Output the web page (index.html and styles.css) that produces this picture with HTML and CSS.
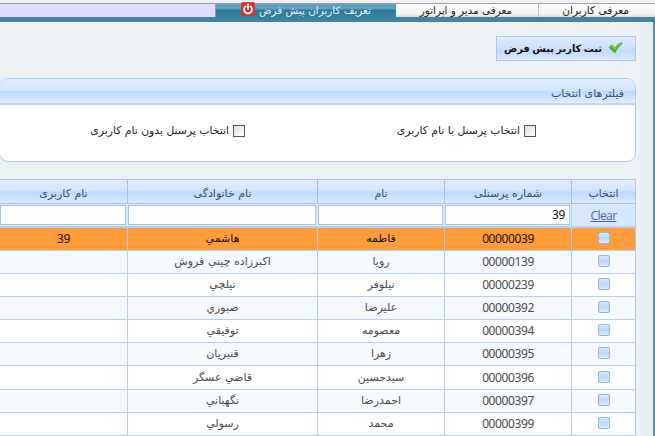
FILE: index.html
```
<!DOCTYPE html>
<html lang="fa" dir="rtl">
<head>
<meta charset="utf-8">
<title>تعریف کاربران پیش فرض</title>
<link rel="stylesheet" href="styles.css">
</head>
<body>
<nav class="tabs">
  <div class="tab tab-users"><span>معرفی کاربران</span></div>
  <div class="tab tab-admin"><span>معرفی مدیر و اپراتور</span></div>
  <div class="tab tab-active"><span>تعریف کاربران پیش فرض</span>
    <svg class="power" viewBox="0 0 14 14"><rect width="14" height="14" rx="2" fill="#d7342f"/><path d="M4.6 4.2a4 4 0 1 0 4.8 0" fill="none" stroke="#fff" stroke-width="1.7" stroke-linecap="round"/><path d="M7 2v5" stroke="#fff" stroke-width="1.7" stroke-linecap="round"/></svg>
  </div>
  <div class="tab-rest"></div>
</nav>
<main class="content">
  <button class="submit"><svg class="check" viewBox="0 0 15 12"><path d="M.8 5.2 4 2.8l2.7 3.1C8.4 3.500 10.700 1.500 13.600.700l.7.8C11.300 4 8.800 7.200 7 11.200Z" fill="#43b51d" stroke="#66ad50" stroke-width=".7"/><path d="m2.200 5.200 1.700-1.200 2.900 3.200c1.500-2.200 3.500-4.300 5.700-5.500" fill="none" stroke="#8ee05a" stroke-width="1"/></svg><span>ثبت کاربر پیش فرض</span></button>
  <section class="panel">
    <h2><span>فیلترهای انتخاب</span></h2>
    <div class="options">
      <label class="opt-with"><i class="box"></i><span>انتخاب پرسنل با نام کاربری</span></label>
      <label class="opt-without"><i class="box"></i><span>انتخاب پرسنل بدون نام کاربری</span></label>
    </div>
  </section>
  <div class="grid">
    <div class="row head"><div><span>انتخاب</span></div><div><span>شماره پرسنلی</span></div><div><span>نام</span></div><div><span>نام خانوادگی</span></div><div><span>نام کاربری</span></div></div>
    <div class="row filter"><div><a>Clear</a></div><div class="field">39</div><div class="field"></div><div class="field"></div><div class="field"></div></div>
    <div class="row selected"><div><i class="tick"></i></div><div class="num">00000039</div><div><span>فاطمه</span></div><div><span>هاشمي</span></div><div class="num">39</div></div>
    <div class="row alt"><div><i class="tick"></i></div><div class="num">00000139</div><div><span>رويا</span></div><div><span>اکبرزاده چيني فروش</span></div><div></div></div>
    <div class="row"><div><i class="tick"></i></div><div class="num">00000239</div><div><span>نيلوفر</span></div><div><span>نيلچي</span></div><div></div></div>
    <div class="row alt"><div><i class="tick"></i></div><div class="num">00000392</div><div><span>عليرضا</span></div><div><span>صبوري</span></div><div></div></div>
    <div class="row"><div><i class="tick"></i></div><div class="num">00000394</div><div><span>معصومه</span></div><div><span>توفيقي</span></div><div></div></div>
    <div class="row alt"><div><i class="tick"></i></div><div class="num">00000395</div><div><span>زهرا</span></div><div><span>قنبريان</span></div><div></div></div>
    <div class="row"><div><i class="tick"></i></div><div class="num">00000396</div><div><span>سيدحسين</span></div><div><span>قاضي عسگر</span></div><div></div></div>
    <div class="row alt"><div><i class="tick"></i></div><div class="num">00000397</div><div><span>احمدرضا</span></div><div><span>نگهباني</span></div><div></div></div>
    <div class="row"><div><i class="tick"></i></div><div class="num">00000399</div><div><span>محمد</span></div><div><span>رسولي</span></div><div></div></div>
  </div>
</main>
</body>
</html>
```
FILE: styles.css
```
* { box-sizing: border-box; }
body {
  margin: 0;
  width: 655px;
  height: 436px;
  overflow: hidden;
  background: #ecf1f3;
  font: 11px/14px "DejaVu Sans", sans-serif;
  color: #222;
}
.tabs {
  display: flex;
  height: 22px;
  padding-top: 3px;
  border-bottom: 5px solid #4384a3;
  background: linear-gradient(#eef1f3 3px, #999ba6 3px, #999ba6 4px, #fff 4px);
}
.tab { display: flex; align-items: flex-start; height: 14px; border-top: 1px solid #999ba6; white-space: nowrap; font-size: 10.4px; }
.tab span { line-height: 12px; }
.tab-users, .tab-admin { background: linear-gradient(#fff, #f1f1f1 80%, #ddd); }
.tab-users { width: 117px; padding-right: 26px; border-left: 1px solid #bbb; font-size: 10.6px; }
.tab-admin { width: 142px; padding-right: 26px; }
.tab-active { width: 180px; height: 19px; padding-right: 25px; color: #e6f3f8; background: linear-gradient(#61a0bd 5px, #2c7898 6px, #4384a3); }
.tab-rest { width: 216px; height: 14px; border: 1px solid #999ba6; border-width: 1px 1px 0 0; background: #deddfc; }
.power { flex: none; width: 14px; height: 14px; margin: -2px 4px 0 0; }
.content {
  height: 414px;
  padding: 14px 17px 0 0;
  border-right: 2px solid #5591a9;
  background: linear-gradient(to left, #e5edf1, #ecf1f3 16px);
}
.submit {
  display: flex;
  align-items: center;
  width: 140px;
  height: 25px;
  margin: 0;
  padding: 0 12px 0 0;
  border: 1px solid #a9c9f2;
  background: linear-gradient(#deebfe, #cee1fc 50%, #bdd9fb 51%, #d9e9ff);
  color: #111;
  font: bold 9.9px/14px "DejaVu Sans", sans-serif;
  word-spacing: -1px;
  white-space: nowrap;
}
.check { flex: none; width: 15px; height: 12px; margin: 0 0 2px 6px; }
.panel { width: 637px; height: 84px; margin-top: 17px; border: 1px solid #abcaf3; border-radius: 9px; background: #fff; overflow: hidden; }
.panel h2 {
  height: 26px;
  margin: 0;
  padding: 8px 11px 0 0;
  border-bottom: 2px solid #bfd8f8;
  background: linear-gradient(#dfecff, #d1e3fd 50%, #bed9fa 52%, #def0ff);
  color: #3f506b;
  font: 11px/14px "DejaVu Sans", sans-serif;
}
.options { display: flex; padding: 19px 99px 0 0; font-size: 10.8px; }
.options label { display: flex; align-items: center; height: 14px; white-space: nowrap; }
.opt-with { width: 291px; }
.box { width: 12px; height: 12px; margin-left: 4px; border: 1px solid #555; background: linear-gradient(135deg, #ddd, #fff); }
.grid { width: 637px; margin-top: 17px; border: solid #a9c7f0; border-width: 1px 1px 0 0; }
.row {
  display: grid;
  grid-template-columns: 64px 127px 127px 190px 128px;
  height: 23.17px;
  border-bottom: 1px solid #b4d0f4;
  background: #fff;
  color: #4a4a4a;
}
.row > div { display: flex; align-items: center; justify-content: center; border-left: 1px solid #b4cdf0; white-space: nowrap; }
.row.alt { background: #f6f9fe; }
.row.selected { background: #ff9c3c; color: #111; }
.row.head { height: 24px; border-bottom: 1px solid #a4c4ef; background: linear-gradient(#dfecff, #d1e3fd 49%, #bcd8fb 51%, #d9eaff); color: #3c4d68; }
.row.head > div { border-color: #9ebde8; padding-top: 4px; }
.row.filter { height: 23.5px; background: #d8e8fc; border-bottom-width: 2px; }
.row.filter a { padding-top: 2px; color: #46699d; text-decoration: underline; font: 12px/14px "Open Sans", sans-serif; letter-spacing: -.6px; }
.row .field { justify-content: flex-start; height: 20px; margin: 1px 1px 0; padding-right: 4px; border: 1px solid #a4c4ec; background: #fff; color: #111; font: 12px/14px "Noto Sans", sans-serif; letter-spacing: -.4px; }
.row .num { font: 12px/14px "Noto Sans", sans-serif; letter-spacing: -.4px; }
.tick { width: 12px; height: 12px; margin: 0 0 2px 0; border: 1px solid #94b5e1; border-radius: 2px; background: linear-gradient(#d9e8fb, #bcd6f6 50%, #dcebff); }
```
